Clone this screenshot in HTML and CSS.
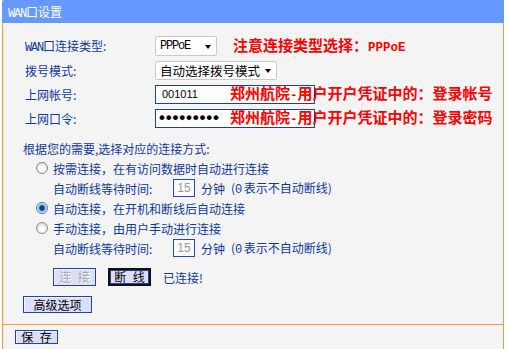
FILE: index.html
```html
<!DOCTYPE html>
<html lang="zh-CN">
<head>
<meta charset="utf-8">
<title>WAN口设置</title>
<link rel="stylesheet" href="styles.css">
</head>
<body>
<div class="panel">
  <div class="hdr"><span class="lat">WAN</span>口设置</div>
  <div class="content">
    <div class="form">
      <div class="row">
        <label class="lbl"><span class="lat">WAN</span>口连接类型:</label>
        <span class="sel sel1"><span class="lat">PPPoE</span></span>
        <span class="note n1">注意连接类型选择：<span class="nlat">PPPoE</span></span>
      </div>
      <div class="row">
        <label class="lbl">拨号模式:</label>
        <span class="sel sel2">自动选择拨号模式</span>
      </div>
      <div class="row">
        <label class="lbl">上网帐号:</label>
        <input class="txt" type="text" value="001011" readonly>
        <span class="note n2">郑州航院<span class="nlat">-</span>用户开户凭证中的：登录帐号</span>
      </div>
      <div class="row">
        <label class="lbl">上网口令:</label>
        <input class="txt pwd" type="password" value="123456789" readonly>
        <span class="note n2">郑州航院<span class="nlat">-</span>用户开户凭证中的：登录密码</span>
      </div>
    </div>
    <div class="section">
      <div class="intro">根据您的需要,选择对应的连接方式:</div>
      <div class="opt"><input class="rd" type="radio" name="mode"><span>按需连接，在有访问数据时自动进行连接</span></div>
      <div class="sub"><span class="subl">自动断线等待时间:</span><input class="num" type="text" value="15" readonly><span class="unit">分钟</span><span class="hint">(<span class="lat">0</span> 表示不自动断线)</span></div>
      <div class="opt"><input class="rd" type="radio" name="mode" checked><span>自动连接，在开机和断线后自动连接</span></div>
      <div class="opt"><input class="rd" type="radio" name="mode"><span>手动连接，由用户手动进行连接</span></div>
      <div class="sub"><span class="subl">自动断线等待时间:</span><input class="num" type="text" value="15" readonly><span class="unit">分钟</span><span class="hint">(<span class="lat">0</span> 表示不自动断线)</span></div>
    </div>
    <div class="btns">
      <button class="btn dis" type="button">连 接</button>
      <button class="btn focus" type="button">断 线</button>
      <span class="status">已连接!</span>
    </div>
    <div class="adv"><button class="btn advb" type="button">高级选项</button></div>
  </div>
  <div class="foot"><button class="btn save" type="button">保 存</button></div>
</div>
</body>
</html>
```
FILE: styles.css
```css
html, body {
  margin: 0;
  background: #ffffff;
}
body {
  font: 12px "Noto Sans CJK SC", sans-serif;
  color: #0f399e;
}
.lat {
  font-family: "Liberation Mono", "DejaVu Sans Mono", monospace;
  font-size: 12px;
  letter-spacing: -1.2px;
}
.panel {
  margin-left: 2px;
  width: 502px;
}
.hdr {
  height: 23px;
  line-height: 23px;
  background: #6699ff;
  color: #ffffff;
  padding-left: 6px;
  border-top-left-radius: 2px;
}
.content {
  background: #f4f4f4;
  border-left: 1px solid #ff9933;
  border-right: 1px solid #ff9933;
  border-bottom: 1px solid #ff9933;
  padding: 11px 0 11px;
}
.form {
  display: flex;
  flex-direction: column;
}
.row {
  position: relative;
  display: flex;
  align-items: center;
  height: 24px;
  padding-left: 22px;
}
.lbl {
  width: 130px;
  flex: none;
}
.sel {
  position: relative;
  box-sizing: border-box;
  display: flex;
  align-items: center;
  background: #ffffff;
  border: 1px solid #c9c9c9;
  border-radius: 2px;
  color: #000000;
  padding-left: 4px;
}
.sel::after {
  content: "";
  position: absolute;
  top: 50%;
  margin-top: -1px;
  border-left: 3px solid transparent;
  border-right: 3px solid transparent;
  border-top: 4px solid #000000;
}
.sel1 {
  width: 62px;
  height: 20px;
}
.sel1::after { right: 5px; }
.sel2 {
  width: 122px;
  height: 19px;
  font-size: 12.5px;
}
.sel2::after { right: 5px; }
.txt {
  box-sizing: border-box;
  width: 160px;
  height: 19px;
  margin: 0;
  border: 1px solid #1f3fa8;
  background: #ffffff;
  color: #000000;
  font: 11px "Liberation Sans", sans-serif;
  padding: 0 0 0 6px;
  outline: none;
}
.pwd {
  font: bold 17px "Liberation Sans", sans-serif;
  letter-spacing: 0.8px;
  padding-left: 3px;
}
.note {
  position: absolute;
  top: 0;
  line-height: 22px;
  color: #ff0000;
  font-weight: bold;
  font-size: 15px;
  white-space: nowrap;
}
.nlat {
  font-family: "Liberation Mono", monospace;
  font-size: 12.5px;
  font-weight: bold;
}
.n1 { left: 230px; }
.n2 { left: 227px; }
.section {
  margin-top: 8px;
  display: flex;
  flex-direction: column;
}
.intro, .opt, .sub {
  height: 20px;
  display: flex;
  align-items: center;
}
.intro { padding-left: 20px; }
.opt { padding-left: 33px; }
.sub { padding-left: 50px; }
.rd {
  appearance: none;
  -webkit-appearance: none;
  width: 12px;
  height: 12px;
  margin: 0 5px 0 0;
  border-radius: 50%;
  border: 1px solid #8c8c8c;
  background: radial-gradient(circle at 50% 60%, #ffffff 0 2px, #e2e2e2 5px);
  box-sizing: border-box;
}
.rd:checked {
  border-color: #4d6f9c;
  background: radial-gradient(circle, #0d3f86 0 2px, #3e86d0 2.8px, #bcd8f0 4px, #eef5fb 5px);
}
.subl { width: 120px; }
.num {
  box-sizing: border-box;
  width: 22px;
  height: 18px;
  margin: 0;
  border: 1px solid #2a4aa8;
  background: #fbfbfb;
  color: #9a9a9a;
  font: 12px "Liberation Sans", sans-serif;
  text-align: center;
  padding: 0;
  outline: none;
}
.unit { margin-left: 6px; }
.hint { margin-left: 6px; }
.btns {
  margin-top: 10px;
  height: 18px;
  padding-left: 50px;
  display: flex;
  align-items: center;
  gap: 12px;
}
.btn {
  box-sizing: border-box;
  margin: 0;
  padding: 0;
  background: #dcdff8;
  border: 1px solid #2541a6;
  box-shadow: inset 1px 1px 0 #f4f5ff;
  color: #000000;
  font: 12px "Noto Sans CJK SC", sans-serif;
  line-height: 1;
  word-spacing: 4px;
}
.btns .btn {
  width: 43px;
  height: 18px;
}
.dis {
  color: #a6a6b4;
  text-shadow: 1px 1px 0 #ffffff;
}
.focus {
  border: 2px solid #111111;
  box-shadow: inset 0 0 0 1px #2541a6;
}
.status { color: #0f399e; }
.adv {
  margin-top: 10px;
  padding-left: 20px;
  height: 17px;
  display: flex;
}
.advb {
  width: 69px;
  height: 17px;
}
.foot {
  background: #f4f4f4;
  border-left: 1px solid #ff9933;
  border-right: 1px solid #ff9933;
  height: 40px;
  padding: 3px 0 0 12px;
  box-sizing: border-box;
}
.save {
  width: 43px;
  height: 14px;
}
```
